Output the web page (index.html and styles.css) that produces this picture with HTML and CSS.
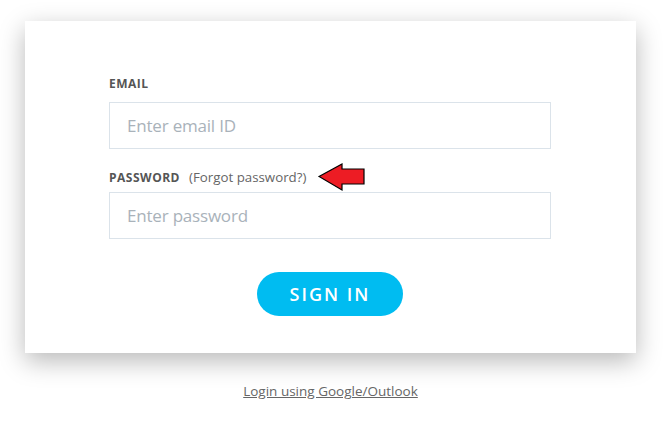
FILE: index.html
```html
<!DOCTYPE html>
<html lang="en">
<head>
  <meta charset="UTF-8" />
  <title>Sign In</title>
  <link rel="stylesheet" href="styles.css">
</head>
<body>
  <div class="card">
    <form class="login-form">
      <label class="field-label" for="email">EMAIL</label>
      <input type="text" id="email" class="field-input" placeholder="Enter email ID" />

      <div class="label-row">
        <label class="field-label" for="password">PASSWORD</label>
        <a class="forgot" href="#">(Forgot password?)</a>
        <svg class="arrow" width="48" height="29" viewBox="0 0 48 29">
          <polygon points="1,13.5 24,1 24,6 46,6 46,21 24,21 24,27" fill="#ed1c24" stroke="#000" stroke-width="1.2" />
        </svg>
      </div>
      <input type="password" id="password" class="field-input" placeholder="Enter password" />

      <div class="actions">
        <button type="button" class="signin-btn">SIGN IN</button>
      </div>
    </form>
  </div>

  <div class="alt-login">
    <a href="#">Login using Google/Outlook</a>
  </div>
</body>
</html>
```

FILE: styles.css
```css
body {
  margin: 0;
  background: #fff;
  font-family: "Open Sans", "Noto Sans", sans-serif;
}
.card {
  margin: 21px 0 0 25px;
  width: 611px;
  height: 332px;
  box-sizing: border-box;
  background: #fff;
  padding: 55px 85px 0 84px;
  box-shadow: 0 8px 24px rgba(0, 0, 0, 0.28);
}
.login-form {
  display: flex;
  flex-direction: column;
}
.field-label {
  font-size: 12px;
  font-weight: 700;
  color: #555;
  letter-spacing: 0.5px;
}
.label-row {
  display: flex;
  align-items: center;
  height: 22px;
  margin-top: 17px;
  margin-bottom: 4px;
}
.forgot {
  margin-left: 9px;
  font-size: 13.3px;
  color: #666;
  text-decoration: none;
}
.arrow {
  margin-left: 12px;
  margin-top: 1px;
}
.field-input {
  width: 442px;
  height: 47px;
  box-sizing: border-box;
  border: 1px solid #dbe3ea;
  padding: 0 18px 0 17px;
  font-size: 17px;
  letter-spacing: -0.2px;
  font-family: inherit;
  color: #333;
  outline: none;
}
.login-form > .field-label {
  line-height: 16px;
  margin-bottom: 10px;
}
.field-input::placeholder {
  color: #a9b2ba;
}
.actions {
  display: flex;
  justify-content: center;
  margin-top: 33px;
}
.signin-btn {
  width: 146px;
  height: 44px;
  border: none;
  border-radius: 22px;
  background: #00bcf1;
  color: #fff;
  font-family: inherit;
  font-size: 18px;
  font-weight: 600;
  letter-spacing: 2px;
  cursor: pointer;
}
.alt-login {
  text-align: center;
  margin-top: 26px;
  padding-right: 10px;
}
.alt-login a {
  font-size: 13.5px;
  color: #666;
}
```
